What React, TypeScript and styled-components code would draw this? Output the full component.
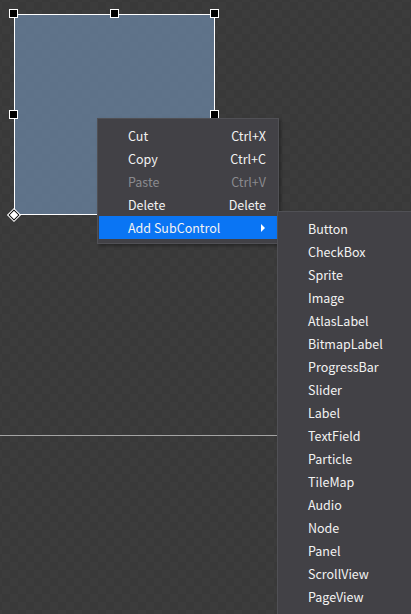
import React from 'react';
import styled, { createGlobalStyle } from 'styled-components';

const GlobalStyle = createGlobalStyle`
  html, body {
    margin: 0;
    padding: 0;
    height: 100%;
    overflow: hidden;
  }
  body {
    font-family: 'Noto Sans CJK SC', 'Noto Sans', sans-serif;
    font-size: 12.5px;
  }
  #root {
    height: 100%;
  }
`;

const mainItems = [
  { label: 'Cut', shortcut: 'Ctrl+X' },
  { label: 'Copy', shortcut: 'Ctrl+C' },
  { label: 'Paste', shortcut: 'Ctrl+V', disabled: true },
  { label: 'Delete', shortcut: 'Delete' },
];

const subControls = [
  'Button',
  'CheckBox',
  'Sprite',
  'Image',
  'AtlasLabel',
  'BitmapLabel',
  'ProgressBar',
  'Slider',
  'Label',
  'TextField',
  'Particle',
  'TileMap',
  'Audio',
  'Node',
  'Panel',
  'ScrollView',
  'PageView',
];

// 3x3 grid of resize handles, the bottom-left slot holds the anchor point
const handleSlots = ['h', 'h', 'h', 'h', '', 'h', 'a', 'h', 'h'];

function App() {
  return (
    <>
      <GlobalStyle />
      <Canvas>
        <Widget>
          <HandleGrid>
            {handleSlots.map((kind, i) =>
              kind === 'a' ? (
                <Anchor key={i} />
              ) : kind === 'h' ? (
                <Handle key={i} />
              ) : (
                <span key={i} />
              )
            )}
          </HandleGrid>
        </Widget>
        <Guide />

        <Menu>
          {mainItems.map((item) => (
            <MenuRow key={item.label} $disabled={item.disabled}>
              <span>{item.label}</span>
              <span>{item.shortcut}</span>
            </MenuRow>
          ))}
          <MenuRow $active>
            <span>Add SubControl</span>
            <Arrow />
            <SubMenu>
              {subControls.map((name) => (
                <MenuRow key={name}>
                  <span>{name}</span>
                </MenuRow>
              ))}
            </SubMenu>
          </MenuRow>
        </Menu>
      </Canvas>
    </>
  );
}

export default App;

const Canvas = styled.div`
  position: relative;
  width: 100%;
  height: 100%;
  background-color: #393939;
  background-image: conic-gradient(
    #3c3c3c 0 25%,
    transparent 0 50%,
    #3c3c3c 0 75%,
    transparent 0
  );
  background-size: 16px 16px;
  background-position: 2px 2px;
  overflow: hidden;
`;

const Widget = styled.div`
  position: absolute;
  left: 14px;
  top: 14px;
  width: 199px;
  height: 199px;
  border: 1px solid #ffffff;
  background: rgba(104, 129, 157, 0.8);
`;

const HandleGrid = styled.div`
  position: absolute;
  inset: -6px -5px -5px -6px;
  display: grid;
  grid-template-columns: repeat(3, 9px);
  grid-template-rows: repeat(3, 9px);
  justify-content: space-between;
  align-content: space-between;
`;

const Handle = styled.div`
  box-sizing: border-box;
  width: 9px;
  height: 9px;
  background: #000;
  border: 1px solid #fff;
`;

const Anchor = styled.div`
  box-sizing: border-box;
  width: 8px;
  height: 8px;
  margin: 1px 0 0 1px;
  background: #fff;
  border: 1px solid #000;
  outline: 1px solid #fff;
  transform: rotate(45deg);
`;

const Guide = styled.div`
  position: absolute;
  left: 0;
  top: 435px;
  width: 278px;
  height: 1px;
  background: #a4a4a4;
`;

const Menu = styled.div`
  position: absolute;
  left: 97px;
  top: 118px;
  width: 178px;
  padding: 5px 1px 4px 1px;
  background: #424146;
  border: 1px solid #505055;
  box-shadow: 2px 2px 3px rgba(0, 0, 0, 0.35);
`;

const SubMenu = styled.div`
  position: absolute;
  left: 178px;
  top: -5px;
  width: 160px;
  height: 420px;
  padding: 5px 1px 4px 1px;
  background: #424146;
  border: 1px solid #505055;
  box-shadow: 2px 2px 3px rgba(0, 0, 0, 0.35);
  z-index: 2;
`;

const MenuRow = styled.div<{ $disabled?: boolean; $active?: boolean }>`
  position: relative;
  display: flex;
  align-items: center;
  justify-content: space-between;
  height: 23px;
  padding: 0 11px 0 29px;
  color: ${(p) => (p.$disabled ? '#8a8a8e' : '#f2f2f2')};
  background: ${(p) => (p.$active ? '#0a75f4' : 'transparent')};
  white-space: nowrap;
  line-height: 23px;
`;

const Arrow = styled.span`
  width: 0;
  height: 0;
  margin-right: 1px;
  border-top: 4px solid transparent;
  border-bottom: 4px solid transparent;
  border-left: 4px solid #ffffff;
`;
